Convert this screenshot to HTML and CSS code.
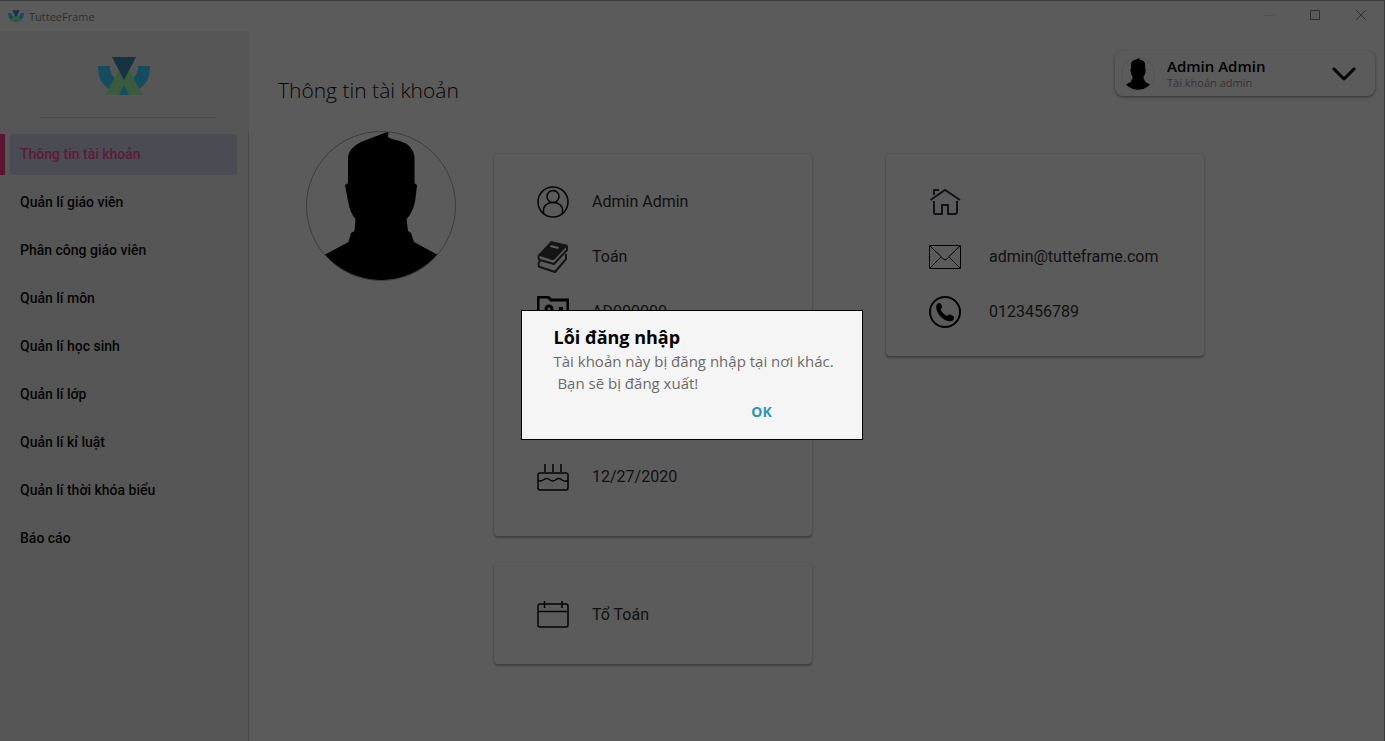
FILE: index.html
```html
<!DOCTYPE html>
<html lang="vi">
<head>
<meta charset="utf-8">
<title>TutteeFrame</title>
<link rel="stylesheet" href="styles.css">
</head>
<body>
<svg class="defs" width="0" height="0" aria-hidden="true">
  <symbol id="logo" viewBox="0 0 52 38">
    <path fill="#164c60" d="M0 9h12c0 6 2 10 5 12l-6 11C4 28 0 20 0 9zM52 9H40c0 6-2 10-5 12l6 11c7-4 11-12 11-23z"/>
    <path fill="#164c60" d="M20 38l6-13 6 13z"/>
    <path fill="#3a5b3e" d="M7.500 38L21 13h10l14 25H31l-5-10-5 10z"/>
    <path fill="#153341" d="M14 0h24L26 23z"/>
  </symbol>
  <symbol id="person" viewBox="0 0 150 150">
    <path d="M81 1L82.500 1 82 6Q84 8 94 10 107 14 108.500 26V52L111 54Q110 64 109 71 106 83 100.500 88L102 100 105 102 108 111 131.500 123.700A75 75 0 0 1 18.700 123.700L42.500 111 45 102 48.500 100 49.500 88Q44 82 42 70L39 54 42 52V26Q43 17 55 11z"/>
  </symbol>
</svg>
<div class="window">
  <header class="titlebar">
    <svg class="app-icon"><use href="#logo"/></svg>
    <span class="app-name">TutteeFrame</span>
    <button class="win-btn faint" aria-label="Minimize"><svg viewBox="0 0 10 10"><path d="M0 5.500h10"/></svg></button>
    <button class="win-btn" aria-label="Maximize"><svg viewBox="0 0 10 10"><path d="M.5.5h9v9h-9z"/></svg></button>
    <button class="win-btn" aria-label="Close"><svg viewBox="0 0 10 10"><path d="M0 0l10 10M10 0L0 10"/></svg></button>
  </header>
  <div class="layout">
    <aside class="sidebar">
      <div class="brand"><svg class="brand-logo"><use href="#logo"/></svg></div>
      <nav class="menu">
        <a class="item active" href="#account"><span>Thông tin tài khoản</span></a>
        <a class="item" href="#teachers"><span>Quản lí giáo viên</span></a>
        <a class="item" href="#assign"><span>Phân công giáo viên</span></a>
        <a class="item" href="#subjects"><span>Quản lí môn</span></a>
        <a class="item" href="#students"><span>Quản lí học sinh</span></a>
        <a class="item" href="#classes"><span>Quản lí lớp</span></a>
        <a class="item" href="#discipline"><span>Quản lí kỉ luật</span></a>
        <a class="item" href="#timetable"><span>Quản lí thời khóa biểu</span></a>
        <a class="item" href="#reports"><span>Báo cáo</span></a>
      </nav>
    </aside>
    <main class="main">
      <div class="topbar">
        <h1>Thông tin tài khoản</h1>
        <button class="account">
          <svg class="account-photo"><use href="#person"/></svg>
          <span class="account-text"><span class="account-name">Admin Admin</span><span class="account-role">Tài khoản admin</span></span>
          <svg class="chevron" viewBox="0 0 24 14"><path d="M2 2l10 10L22 2"/></svg>
        </button>
      </div>
      <div class="profile">
        <svg class="photo"><use href="#person"/></svg>
        <div class="column">
          <section class="card">
            <div class="row">
              <svg class="icon" viewBox="0 0 32 32"><g class="thin"><circle cx="16" cy="16" r="15"/><circle cx="16" cy="10.500" r="6"/><path d="M6.500 27.500v-3c0-5 4-8 9.500-8s9.500 3 9.500 8v3"/></g></svg>
              <span>Admin Admin</span>
            </div>
            <div class="row">
              <svg class="icon" viewBox="0 0 32 32"><path fill="#141414" fill-rule="evenodd" d="M14 0l17 4-13 14c-1 1-2 1-3 1L3 15c-1 0-1-2 0-3zM14 4l-1 2 8 2 1-2z"/><path fill="none" stroke="#141414" stroke-width="2" stroke-linejoin="round" d="M3 13c-2 2-2 5 0 6l14 4L30 9V5M3 20c-2 2-2 5 0 6l15 5 11-13v-5"/></svg>
              <span>Toán</span>
            </div>
            <div class="row">
              <svg class="icon" viewBox="0 0 32 32"><g class="folder"><path d="M1 30V1h10l3 3h17v26z"/><circle cx="12" cy="13" r="3"/><path d="M6 24c0-4 3-6 6-6s6 2 6 6M22 12.500h4M22 19h4"/></g></svg>
              <span>AD000000</span>
            </div>
            <div class="row"></div>
            <div class="row"></div>
            <div class="row">
              <svg class="icon" viewBox="0 0 32 32"><g class="thin"><rect x="1" y="12" width="30" height="17" rx="2"/><path d="M8 3v8M16 3v8M24 3v8M1 19c2 2 4 1 6-.500 2-1.500 4-1.500 6 .500 2 1.500 4 1.500 6-.500 2-1.500 4-1.500 6 .500 2 1.500 4 2 6 0"/></g></svg>
              <span>12/27/2020</span>
            </div>
          </section>
          <section class="card group">
            <div class="row">
              <svg class="icon" viewBox="0 0 32 32"><g class="thin"><rect x="1" y="5" width="30" height="23" rx="2"/><path d="M1 12.500h30M7.500 2v7M25 2v7"/></g></svg>
              <span>Tổ Toán</span>
            </div>
          </section>
        </div>
        <div class="column">
          <section class="card contact">
            <div class="row">
              <svg class="icon" viewBox="0 0 32 32"><g fill="none" stroke="#111318" stroke-width="2"><path d="M1.500 14L16 4l15 10M5 9V4h5M5 15v12q0 1 1 1h7v-9h6v9h7q2 0 2-2V15"/></g></svg>
            </div>
            <div class="row">
              <svg class="icon" viewBox="0 0 32 32"><path fill="none" stroke="#000" d="M.5 4.500h31v23H.5zM1 5l12.500 12q2.500 4 5 0L31 5M1 27l11-11M31 27L20 16"/></svg>
              <span>admin@tutteframe.com</span>
            </div>
            <div class="row">
              <svg class="icon" viewBox="0 0 32 32"><circle cx="16" cy="16" r="15" fill="none" stroke="#000" stroke-width="2"/><path d="M8 8c2-2 4-1 5 2 .5 2-.5 2-1.500 3.500 1.500 3 3.500 5 6.500 6.500 1.500-1 2-2 4-1l2 1c2 1 1 4-1 5-3 1-7 0-11-4S6 11 8 8z"/></svg>
              <span>0123456789</span>
            </div>
          </section>
        </div>
      </div>
    </main>
  </div>
</div>
<div class="overlay">
  <section class="dialog" role="alertdialog" aria-labelledby="dlg-title" aria-describedby="dlg-text">
    <h2 id="dlg-title">Lỗi đăng nhập</h2>
    <p id="dlg-text">Tài khoản này bị đăng nhập tại nơi khác.
 Bạn sẽ bị đăng xuất!</p>
    <button class="ok">OK</button>
  </section>
</div>
</body>
</html>
```
FILE: styles.css
```css
* { box-sizing: border-box; }
body { margin: 0; background: #5b5b5b; color: #111; font-family: Roboto, "Noto Sans", sans-serif; }
button { margin: 0; padding: 0; border: 0; background: none; font: inherit; color: inherit; }
.defs { position: absolute; }
.window { display: flex; flex-direction: column; min-height: 100vh; border-top: 1px solid #3a3a3a; border-right: 1px solid #3a3a3a; }

.titlebar { display: flex; align-items: center; height: 30px; padding-left: 8px; font-family: "Open Sans", "Noto Sans", sans-serif; font-size: 11px; color: #303030; }
.app-icon { width: 16px; height: 12px; margin-right: 5px; }
.app-name { flex: 1; }
.win-btn { width: 46px; height: 28px; align-self: flex-start; color: #303030; }
.win-btn svg { display: block; width: 10px; height: 10px; margin: 0 auto; fill: none; stroke: currentColor; stroke-width: 1; overflow: visible; }
.win-btn.faint { color: #525252; }

.layout { display: flex; flex: 1; }
.sidebar { width: 249px; flex: none; display: flex; flex-direction: column; background: #565656; }
.brand { display: flex; justify-content: center; height: 87px; margin: 0 33px 0 40px; padding-top: 26px; border-bottom: 1px solid #4a4a4a; }
.brand-logo { width: 52px; height: 38px; margin-right: 9px; }
.menu { flex: 1; display: flex; flex-direction: column; gap: 7px; margin-top: 13px; padding-top: 3px; border-right: 1px solid #4a4a4a; }
.item { height: 41px; padding: 0 11px 0 5px; border-left: 5px solid transparent; color: #050505; font-size: 14px; font-weight: 500; line-height: 41px; text-decoration: none; }
.item span { display: block; padding-left: 10px; border-radius: 4px; }
.item.active { border-color: #5b142f; color: #5d1c35; }
.item.active span { background: #4b4b54; }

.main { flex: 1; min-width: 0; }
.topbar { display: flex; justify-content: space-between; align-items: flex-start; height: 100px; padding: 20px 9px 0 29px; }
h1 { margin: 21px 0 0; font-family: "Open Sans", "Noto Sans", sans-serif; font-size: 21px; font-weight: 300; line-height: 36px; color: #050505; }
.account { display: flex; align-items: center; width: 260px; height: 45px; padding: 0 19px 0 7px; border-radius: 8px; background: #5b5b5b; box-shadow: 0 1px 3px rgba(0, 0, 0, .45); text-align: left; font-family: "Open Sans", "Noto Sans", sans-serif; }
.account-photo { width: 32px; height: 32px; margin-right: 13px; border-radius: 50%; box-shadow: 0 0 0 1px #565656; }
.account-text { flex: 1; padding-top: 1px; }
.account-name, .account-role { display: block; }
.account-name { font-size: 15px; font-weight: 600; line-height: 18px; color: #000; }
.account-role { font-size: 11px; line-height: 16px; color: #353535; }
.chevron { width: 24px; height: 14px; fill: none; stroke: #000; stroke-width: 3; stroke-linecap: round; stroke-linejoin: round; }

.profile { display: flex; align-items: flex-start; padding: 0 57px; }
.photo { flex: none; width: 150px; height: 150px; margin-right: 38px; border-radius: 50%; outline: 1px solid #3d3d3d; outline-offset: -1px; }
.column { flex: 0 1 318px; display: flex; flex-direction: column; gap: 27px; margin-top: 23px; }
.column + .column { margin-left: 74px; }
.card { padding: 20px 43px 32px; border-radius: 4px; box-shadow: 0 2px 2px rgba(0, 0, 0, .28), 0 0 2px rgba(0, 0, 0, .2); }
.row { display: flex; align-items: center; gap: 23px; height: 55px; font-size: 16px; }
.card.group { padding: 24px 43px 22px; }
.card.contact { padding-bottom: 17px; }
.contact .row { gap: 28px; }
.icon { flex: none; width: 32px; height: 32px; overflow: hidden; }
.thin, .folder { fill: none; stroke: #050505; stroke-width: 1.500; }
.folder { stroke: #000; stroke-width: 3; }

.overlay { position: fixed; inset: 0; display: flex; align-items: center; justify-content: center; padding: 9px 2px 0 0; }
.dialog { display: flex; flex-direction: column; width: 342px; padding: 13px 30px 13px 32px; border: 1px solid #000; background: #f5f5f5; font-family: "Open Sans", "Noto Sans", sans-serif; }
h2 { margin: 0; font-size: 18px; font-weight: 700; line-height: 26px; color: #000; }
.dialog p { margin: 0; font-size: 15px; line-height: 22px; color: #6b6b6b; white-space: pre; }
.ok { align-self: flex-end; width: 80px; height: 32px; padding-top: 3px; margin-right: 30px; font-size: 14px; font-weight: 700; color: #2e95b5; }
```
